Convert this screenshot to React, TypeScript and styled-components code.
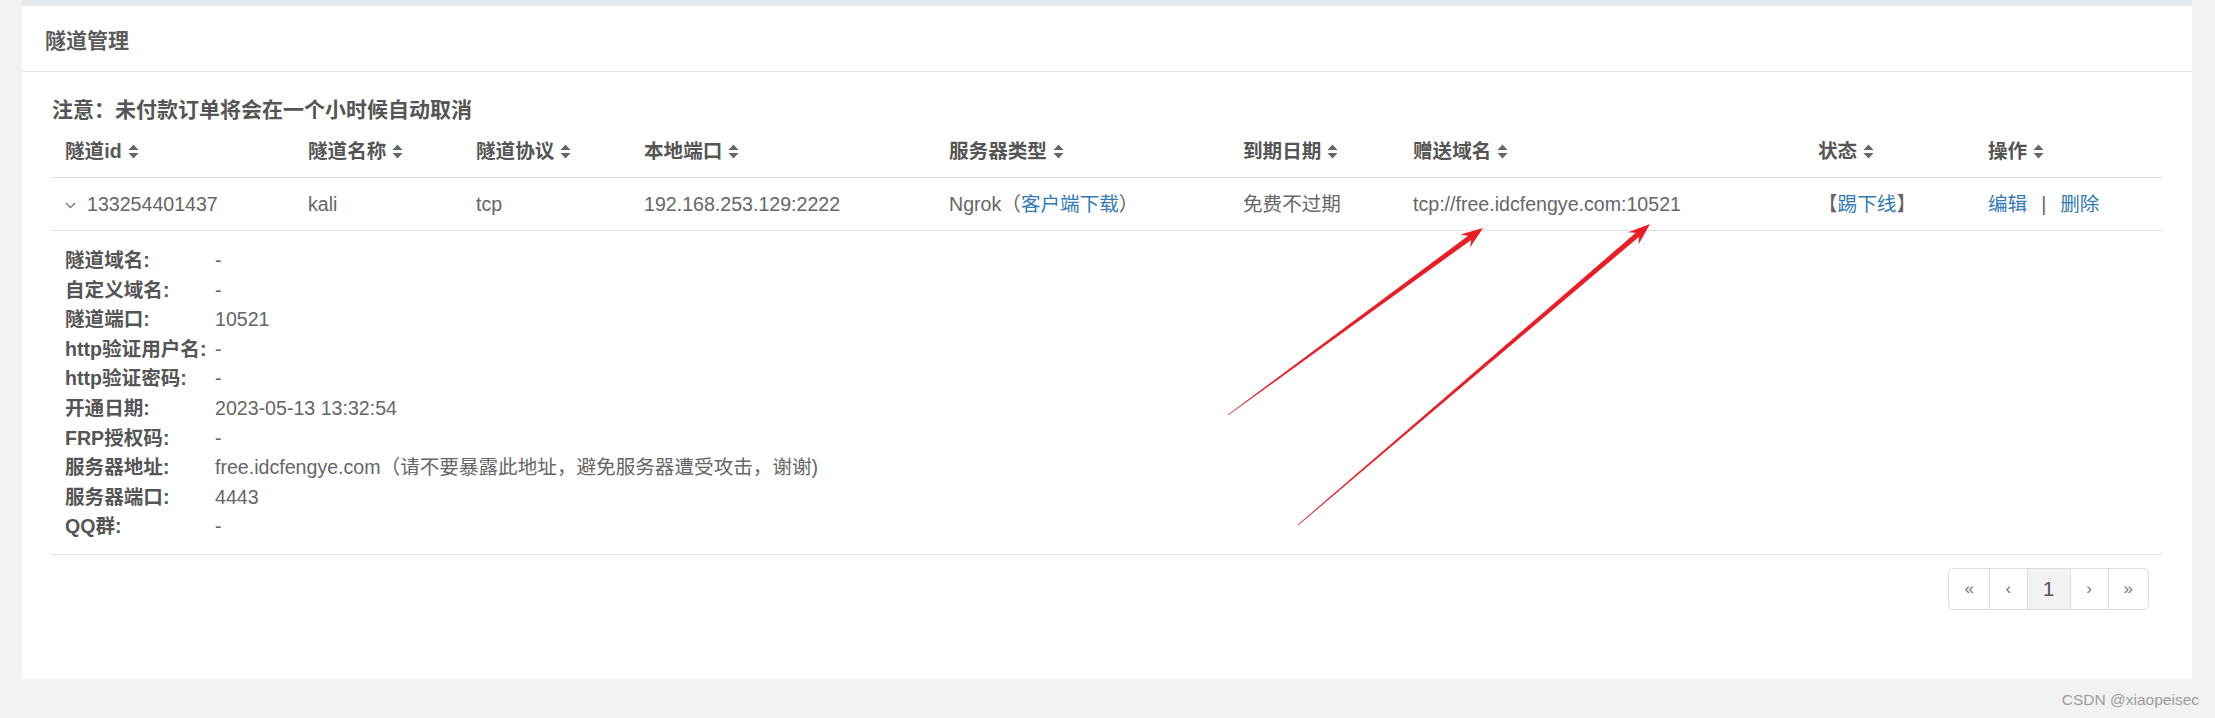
import styled, { createGlobalStyle } from 'styled-components';

const GlobalStyle = createGlobalStyle`
  html, body {
    margin: 0;
    padding: 0;
    background: #f2f2f2;
  }
  body {
    font-family: "Liberation Sans", "Noto Sans CJK SC", sans-serif;
    font-size: 19.6px;
    color: #666;
  }
`;

const Page = styled.div`
  position: relative;
  height: 718px;
  overflow: hidden;
  box-sizing: border-box;
  padding: 0 23px 0 22px;
`;

const Panel = styled.div`
  background: #fff;
  border-top: 6px solid #e5e8ec;
`;

const PanelHeading = styled.div`
  display: flex;
  align-items: center;
  height: 65px;
  padding: 0 23px;
  border-bottom: 1px solid #e5e5e5;
`;

const Title = styled.h3`
  margin: 0;
  font-family: "Noto Sans CJK SC", "Liberation Sans", sans-serif;
  font-size: 21px;
  font-weight: 700;
  line-height: 30px;
  color: #5c5c5c;
`;

const PanelBody = styled.div`
  padding: 23px 30px 69px;
`;

const Notice = styled.div`
  font-size: 21px;
  line-height: 30px;
  font-weight: bold;
  color: #555;
`;

const Table = styled.table`
  width: 100%;
  table-layout: fixed;
  border-collapse: collapse;
`;

const Col = styled.col<{ $w: number }>`
  width: ${({ $w }) => $w}px;
`;

const Th = styled.th`
  padding: 12px 13px;
  line-height: 28px;
  text-align: left;
  font-weight: bold;
  color: #555;
  white-space: nowrap;
  border-bottom: 1px solid #ddd;
`;

const Td = styled.td`
  padding: 12px 13px;
  line-height: 28px;
  white-space: nowrap;
  border-bottom: 1px solid #e3e3e3;
  vertical-align: middle;
`;

const DetailCell = styled.td`
  padding: 15px 13px 12px;
  border-bottom: 1px solid #e3e3e3;
`;

const DetailGrid = styled.div`
  display: grid;
  grid-template-columns: 150px 1fr;
  line-height: 29.6px;
`;

const DetailLabel = styled.div`
  font-weight: bold;
  color: #555;
  white-space: nowrap;
`;

const DetailValue = styled.div`
  color: #666;
`;

const SortWrap = styled.span`
  display: inline-flex;
  align-items: center;
  gap: 6px;
`;

const Link = styled.a`
  color: #337ab7;
  text-decoration: none;
  cursor: pointer;
`;

const Sep = styled.span`
  margin: 0 14px;
  color: #666;
`;

const Expander = styled.span`
  display: inline-flex;
  align-items: center;
  margin-right: 11px;
  vertical-align: middle;
`;

const PagerRow = styled.div`
  display: flex;
  justify-content: flex-end;
  padding-right: 13px;
  margin-top: 13px;
`;

const Pager = styled.ul`
  display: flex;
  margin: 0;
  padding: 0;
  list-style: none;
`;

const PageBtn = styled.li<{ $active?: boolean }>`
  padding: 6px 15px;
  line-height: 28px;
  border: 1px solid #ddd;
  margin-left: -1px;
  color: ${({ $active }) => ($active ? '#555' : '#777')};
  background: ${({ $active }) => ($active ? '#f2f2f2' : '#fff')};
  font-size: ${({ $active }) => ($active ? '21px' : '17px')};
  text-align: center;
  min-width: 7px;
  &:first-child {
    margin-left: 0;
    border-radius: 5px 0 0 5px;
  }
  &:last-child {
    border-radius: 0 5px 5px 0;
  }
`;

const Overlay = styled.svg`
  position: absolute;
  left: 0;
  top: 0;
  pointer-events: none;
`;

const Watermark = styled.div`
  position: absolute;
  right: 16px;
  bottom: 9px;
  font-size: 15.5px;
  color: #9c9c9c;
`;

const SortIcon = () => (
  <svg width="11" height="17" viewBox="0 0 11 17">
    <path d="M5.5 1.5 L10.5 7 H0.5Z M5.5 15.5 L10.5 10 H0.5Z" fill="#666" />
  </svg>
);

const Chevron = () => (
  <svg width="11" height="7" viewBox="0 0 11 7">
    <path d="M1 1l4.5 4.5L10 1" fill="none" stroke="#777" strokeWidth="1.3" />
  </svg>
);

// tapered red arrow, thin at the tail
function arrowPoints(x1: number, y1: number, x2: number, y2: number) {
  const dx = x2 - x1;
  const dy = y2 - y1;
  const len = Math.hypot(dx, dy);
  const ux = dx / len;
  const uy = dy / len;
  const nx = -uy;
  const ny = ux;
  const headLen = 22;
  const headW = 8;
  const neck = 2.6;
  const tail = 0.4;
  const p = (a: number, b: number) => `${(x2 - ux * a + nx * b).toFixed(1)},${(y2 - uy * a + ny * b).toFixed(1)}`;
  return [
    p(0, 0),
    p(headLen, headW),
    p(headLen * 0.75, neck),
    p(len, tail),
    p(len, -tail),
    p(headLen * 0.75, -neck),
    p(headLen, -headW),
  ].join(' ');
}

const cols = [243, 168, 168, 305, 294, 170, 405, 170, 187];
const headers = ['隧道id', '隧道名称', '隧道协议', '本地端口', '服务器类型', '到期日期', '赠送域名', '状态', '操作'];

const details: [string, string][] = [
  ['隧道域名:', '-'],
  ['自定义域名:', '-'],
  ['隧道端口:', '10521'],
  ['http验证用户名:', '-'],
  ['http验证密码:', '-'],
  ['开通日期:', '2023-05-13 13:32:54'],
  ['FRP授权码:', '-'],
  ['服务器地址:', 'free.idcfengye.com（请不要暴露此地址，避免服务器遭受攻击，谢谢)'],
  ['服务器端口:', '4443'],
  ['QQ群:', '-'],
];

export default function App() {
  return (
    <>
      <GlobalStyle />
      <Page>
        <Panel>
          <PanelHeading>
            <Title>隧道管理</Title>
          </PanelHeading>
          <PanelBody>
            <Notice>注意：未付款订单将会在一个小时候自动取消</Notice>
            <Table>
              <colgroup>
                {cols.map((w, i) => (
                  <Col key={i} $w={w} />
                ))}
              </colgroup>
              <thead>
                <tr>
                  {headers.map((h) => (
                    <Th key={h}>
                      <SortWrap>
                        {h}
                        <SortIcon />
                      </SortWrap>
                    </Th>
                  ))}
                </tr>
              </thead>
              <tbody>
                <tr>
                  <Td>
                    <Expander>
                      <Chevron />
                    </Expander>
                    133254401437
                  </Td>
                  <Td>kali</Td>
                  <Td>tcp</Td>
                  <Td>192.168.253.129:2222</Td>
                  <Td>
                    Ngrok（<Link>客户端下载</Link>）
                  </Td>
                  <Td>免费不过期</Td>
                  <Td>tcp://free.idcfengye.com:10521</Td>
                  <Td>
                    【<Link>踢下线</Link>】
                  </Td>
                  <Td>
                    <Link>编辑</Link>
                    <Sep>|</Sep>
                    <Link>删除</Link>
                  </Td>
                </tr>
                <tr>
                  <DetailCell colSpan={9}>
                    <DetailGrid>
                      {details.map(([k, v]) => [
                        <DetailLabel key={k}>{k}</DetailLabel>,
                        <DetailValue key={k + 'v'}>{v}</DetailValue>,
                      ])}
                    </DetailGrid>
                  </DetailCell>
                </tr>
              </tbody>
            </Table>
            <PagerRow>
              <Pager>
                <PageBtn>«</PageBtn>
                <PageBtn>‹</PageBtn>
                <PageBtn $active>1</PageBtn>
                <PageBtn>›</PageBtn>
                <PageBtn>»</PageBtn>
              </Pager>
            </PagerRow>
          </PanelBody>
        </Panel>
        <Overlay width="2215" height="718" viewBox="0 0 2215 718">
          <polygon points={arrowPoints(1228, 415, 1483, 228)} fill="#ec1c24" />
          <polygon points={arrowPoints(1298, 525, 1650, 224)} fill="#ec1c24" />
        </Overlay>
        <Watermark>CSDN @xiaopeisec</Watermark>
      </Page>
    </>
  );
}
